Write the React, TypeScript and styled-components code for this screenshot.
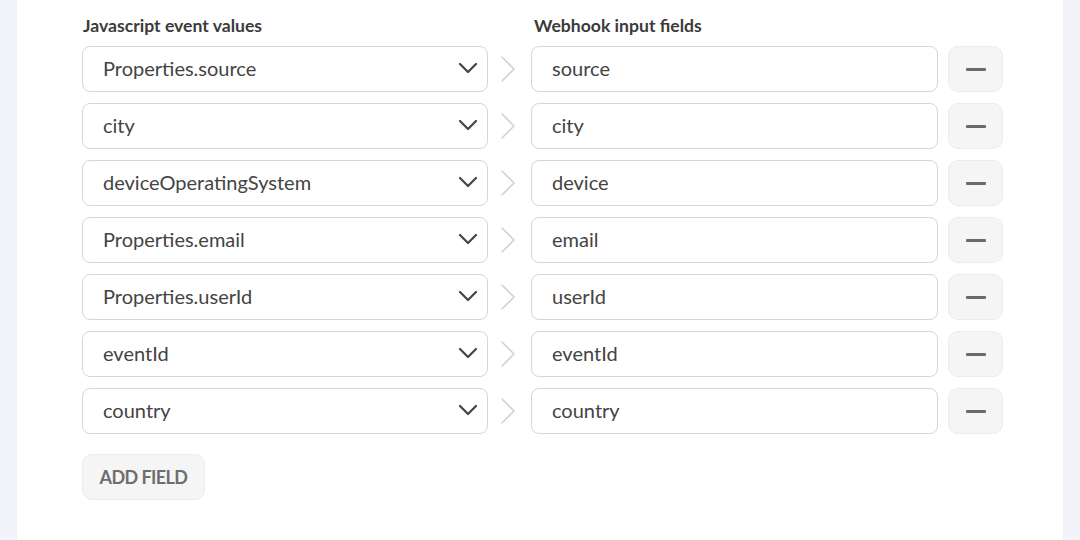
import React from "react";
import styled, { createGlobalStyle } from "styled-components";

const Global = createGlobalStyle`
  html, body { margin: 0; padding: 0; background: #f3f4f9; }
  body { font-family: Lato, "Noto Sans", sans-serif; }
  * { box-sizing: border-box; }
`;

const Page = styled.div`
  width: 1080px;
  height: 540px;
  overflow: hidden;
  padding: 0 17px;
`;

const Card = styled.div`
  background: #ffffff;
  height: 560px;
  padding: 15px 0 0 65px;
`;

const HeaderRow = styled.div`
  display: grid;
  grid-template-columns: 406px 45px 405px;
  height: 31px;
`;

const Label = styled.div`
  font-size: 17.6px;
  font-weight: 700;
  color: #3b3b3b;
  line-height: 22px;
  padding-left: 1px;
`;

const Rows = styled.div`
  display: flex;
  flex-direction: column;
  gap: 11px;
`;

const Row = styled.div`
  display: grid;
  grid-template-columns: 406px 43px 407px 55px;
  height: 46px;
`;

const Select = styled.div`
  display: flex;
  align-items: center;
  justify-content: space-between;
  border: 1px solid #d6d6d6;
  border-radius: 8px;
  padding: 0 9px 2px 20px;
  font-size: 20px;
  color: #444;
  background: #fff;
`;

const Input = styled.div`
  display: flex;
  align-items: center;
  border: 1px solid #d6d6d6;
  border-radius: 8px;
  padding: 0 20px 2px;
  font-size: 20px;
  color: #444;
  background: #fff;
`;

const Arrow = styled.div`
  display: flex;
  align-items: center;
  padding-left: 12px;
`;

const RemoveButton = styled.button`
  margin-left: 10px;
  width: 55px;
  height: 46px;
  border: 1px solid #ececec;
  border-radius: 10px;
  background: #f5f5f5;
  display: flex;
  align-items: center;
  justify-content: center;
  padding: 0;
`;

const Dash = styled.span`
  display: block;
  width: 20px;
  height: 3px;
  border-radius: 1px;
  background: #6a6a6a;
`;

const AddButton = styled.button`
  margin-top: 20px;
  width: 123px;
  height: 46px;
  border: 1px solid #ececec;
  border-radius: 10px;
  background: #f5f5f5;
  font-family: Lato, "Noto Sans", sans-serif;
  font-weight: 700;
  font-size: 18px;
  color: #6e6e6e;
  text-transform: uppercase;
  padding: 0;
  letter-spacing: -0.6px;
`;

const Chevron = () => (
  <svg width="20" height="12" viewBox="0 0 20 12" fill="none">
    <path d="M2 2l8 8 8-8" stroke="#444" strokeWidth="2.2" strokeLinecap="round" strokeLinejoin="round" />
  </svg>
);

const RightArrow = () => (
  <svg width="16" height="28" viewBox="0 0 16 28" fill="none">
    <path d="M2 2l12 12-12 12" stroke="#d3d3d3" strokeWidth="1.6" strokeLinecap="round" strokeLinejoin="round" />
  </svg>
);

const mappings: [string, string][] = [
  ["Properties.source", "source"],
  ["city", "city"],
  ["deviceOperatingSystem", "device"],
  ["Properties.email", "email"],
  ["Properties.userId", "userId"],
  ["eventId", "eventId"],
  ["country", "country"],
];

export default function App() {
  return (
    <>
      <Global />
      <Page>
        <Card>
          <HeaderRow>
            <Label>Javascript event values</Label>
            <span />
            <Label>Webhook input fields</Label>
          </HeaderRow>
          <Rows>
            {mappings.map(([src, dst]) => (
              <Row key={src}>
                <Select>
                  <span>{src}</span>
                  <Chevron />
                </Select>
                <Arrow>
                  <RightArrow />
                </Arrow>
                <Input>{dst}</Input>
                <RemoveButton aria-label="Remove">
                  <Dash />
                </RemoveButton>
              </Row>
            ))}
          </Rows>
          <AddButton>Add field</AddButton>
        </Card>
      </Page>
    </>
  );
}
